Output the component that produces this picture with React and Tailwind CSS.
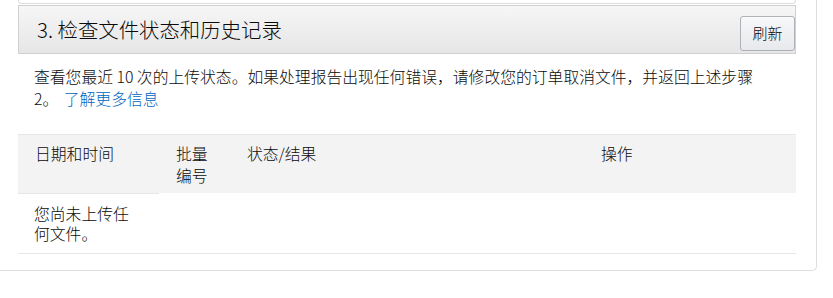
const font = { fontFamily: '"Noto Sans CJK SC", "Noto Sans", sans-serif' };

const App = () => {
  return (
    <div className="w-[833px] h-[298px] bg-white text-[#0a0a0a] font-light" style={font}>
      <div className="w-[817px] border-r border-b border-[#dddddd] rounded-br-[5px] pl-[18px] pr-[20px] pb-[16px]">
        {/* bottom of previous box */}
        <div className="h-[4px] border-x border-b border-[#dddddd] rounded-b-[4px]"></div>

        <div className="mt-[1px] h-[49px] flex items-end justify-between border border-[#d0d0d0] bg-gradient-to-b from-[#f6f6f6] to-[#e6e6e6] pb-[2px]">
          <h2 className="self-center pl-[18px] text-[20.4px] leading-[24px] font-light">
            3. 检查文件状态和历史记录
          </h2>
          <button
            type="button"
            className="h-[35px] w-[55px] rounded-[3px] border border-[#adb1b8] bg-gradient-to-b from-[#f7f8fa] to-[#e7e9ec] text-[15px] font-light shadow-[0_1px_0_rgba(255,255,255,0.6)_inset]"
          >
            刷新
          </button>
        </div>

        <p className="mt-[12px] pl-[16px] pr-[16px] text-[15.8px] leading-[22px]">
          <span>查看您最近 10 次的上传状态。如果处理报告出现任何错误，请修改您的订单取消文件，并返回上述步骤</span>{" "}
          <span>2。</span>{" "}
          <a href="#" className="ml-[2px] text-[#0066c0]">
            了解更多信息
          </a>
        </p>

        <table className="mt-[24px] w-full table-fixed border-collapse text-[15.8px]">
          <colgroup>
            <col className="w-[141px]" />
            <col className="w-[71px]" />
            <col className="w-[354px]" />
            <col />
          </colgroup>
          <thead>
            <tr className="bg-[#f3f3f3] border-t border-[#e7e7e7] align-top">
              <th className="border-b border-[#e7e7e7] pl-[17px] pr-[17px] pt-[8px] pb-[6px] text-left font-light leading-[22px]">
                日期和时间
              </th>
              <th className="pl-[17px] pr-[17px] pt-[8px] pb-[6px] text-left font-light leading-[22px]">
                批量编号
              </th>
              <th className="pl-[17px] pr-[17px] pt-[8px] pb-[6px] text-left font-light leading-[22px]">
                状态/结果
              </th>
              <th className="pl-[17px] pr-[17px] pt-[8px] pb-[6px] text-left font-light leading-[22px]">
                操作
              </th>
            </tr>
          </thead>
          <tbody>
            <tr className="border-b border-[#e7e7e7] align-top">
              <td className="pl-[16px] pr-[17px] pt-[10px] pb-[8px] leading-[20.5px]">
                您尚未上传任何文件。
              </td>
              <td></td>
              <td></td>
              <td></td>
            </tr>
          </tbody>
        </table>
      </div>
    </div>
  );
};

export default App;
